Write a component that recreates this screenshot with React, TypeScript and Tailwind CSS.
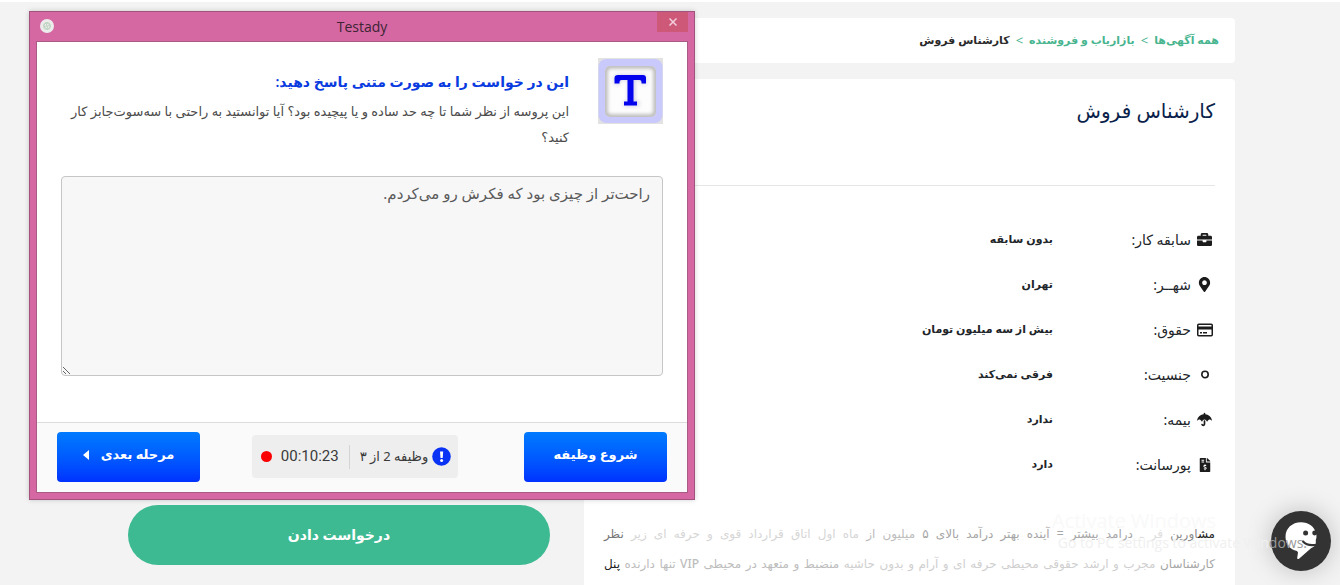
import React from "react";
import { FaBriefcase, FaMapMarkerAlt, FaUmbrella, FaFileInvoiceDollar } from "react-icons/fa";

function CardIcon() {
  return (
    <svg viewBox="0 0 16 14" className="w-4 h-[14px]" fill="none">
      <rect x="0.75" y="1.25" width="14.5" height="11.5" rx="1" stroke="currentColor" strokeWidth="1.5" />
      <rect x="1" y="3.5" width="14" height="3" fill="currentColor" />
      <path d="M3 9.8h2M6 9.8h4" stroke="currentColor" strokeWidth="1.4" />
    </svg>
  );
}

function RingIcon() {
  return (
    <svg viewBox="0 0 10 10" className="size-[10px]" fill="none">
      <circle cx="5" cy="4.500" r="3.2" stroke="currentColor" strokeWidth="1.6" />
    </svg>
  );
}

const facts = [
  { label: "سابقه کار:", value: "بدون سابقه", icon: <FaBriefcase size={15} /> },
  { label: "شهــر:", value: "تهران", icon: <FaMapMarkerAlt size={15} /> },
  { label: "حقوق:", value: "بیش از سه میلیون تومان", icon: <CardIcon /> },
  { label: "جنسیت:", value: "فرقی نمی‌کند", icon: <RingIcon /> },
  { label: "بیمه:", value: "ندارد", icon: <FaUmbrella size={15} /> },
  { label: "پورسانت:", value: "دارد", icon: <FaFileInvoiceDollar size={14} /> },
];

function TextTaskIcon() {
  return (
    <svg viewBox="0 0 65 66" className="w-[65px] h-[66px] shrink-0">
      <defs>
        <filter id="soft" x="-20%" y="-20%" width="140%" height="140%">
          <feGaussianBlur stdDeviation="2.2" />
        </filter>
        <clipPath id="panel">
          <rect x="7" y="8" width="51" height="51" rx="5" />
        </clipPath>
      </defs>
      <rect width="65" height="66" fill="#e2e2e2" />
      <rect x="0.5" y="1" width="64" height="64" rx="8" fill="#c9c9fb" />
      <rect x="7" y="8" width="51" height="51" rx="5" fill="#fdfdfd" />
      <g clipPath="url(#panel)">
        <rect x="7" y="8" width="51" height="51" rx="5" fill="none" stroke="#a2a2a2" strokeWidth="4" filter="url(#soft)" />
      </g>
      <path
        d="M20 17h25q3 0 3 3v6.500h-4.500v-3q0-2-2-2h-4.500v22h4v4.500H26v-4.500h4v-22h-6q-2 0-2 2v3h-5.500V20q0-3 3.500-3z"
        fill="#9a9ad0"
        opacity="0.5"
        filter="url(#soft)"
      />
      <path
        d="M20 17h25q3 0 3 3v5.500h-4.500v-1.500q0-2-2-2h-6v21.500h3.500v4H26v-4h3.500V22h-6q-2 0-2 2v1.500H16.500V20q0-3 3.500-3z"
        fill="#0303ee"
      />
    </svg>
  );
}

function ChatIcon() {
  return (
    <svg viewBox="0 0 60 60" className="size-[60px]">
      <circle cx="30" cy="30" r="30" fill="#333" />
      <path
        d="M30 11.300c-9 0-15.500 6.200-15.500 14.200 0 7.500 4.500 13 11.500 14.500l1 1.500-.8 5.500c0 1.200 1 1.400 1.800.700l12-10.500c2.800-1.200 4.300-2.700 4.800-4.200v-4.200c.8-1.800 1-4 .2-6.300C43.500 15.500 37.500 11.300 30 11.300z"
        fill="#fff"
      />
      <circle cx="34.600" cy="22" r="2.500" fill="#333" />
      <circle cx="43.600" cy="22" r="2.400" fill="#333" />
      <path d="M32 30.500c3 3.200 8 4.300 14 3" fill="none" stroke="#333" strokeWidth="2.200" strokeLinecap="round" />
    </svg>
  );
}

function TestadyWindow() {
  return (
    <section
      role="dialog"
      aria-label="Testady"
      dir="rtl"
      className="absolute left-[29px] top-[9px] flex w-[666px] flex-col border border-[#a3517d] bg-[#d568a2] px-[6px] pb-[6px] shadow-[0_0_5px_rgba(0,0,0,0.18)]"
    >
      <header dir="ltr" className="grid h-[29px] grid-cols-[1fr_auto_1fr]">
        <span className="ml-1 mt-[7px] flex size-[14px] items-center justify-center rounded-full bg-[#ececec]">
          <svg viewBox="0 0 10 10" className="size-[10px]" fill="none" stroke="#b9d0bd" strokeWidth="0.8">
            <circle cx="5" cy="5" r="3.600" />
            <path d="M2 4l2-2 3 1 1 3-2 2-3-1zM4 2l2 6M2.500 5.500l5-1" />
          </svg>
        </span>
        <h2 className="mt-[5px] font-['Open_Sans',sans-serif] text-sm leading-5 text-[#3c2434]">Testady</h2>
        <button
          type="button"
          aria-label="Close"
          className="flex h-5 w-[31px] items-center justify-center justify-self-end bg-[#cd5877]"
        >
          <svg viewBox="0 0 8 8" className="size-2" stroke="#f3cfdd" strokeWidth="1.500">
            <path d="M0.500 0.500l7 7M7.500 0.500l-7 7" />
          </svg>
        </button>
      </header>
      <div className="border border-[#a95a85] bg-white">
        <div className="px-6 pt-4">
          <div className="flex gap-[29px]">
            <TextTaskIcon />
            <div className="grow pt-2">
              <h3 className="text-sm font-semibold leading-8 text-[#0a3be0]">این در خواست را به صورت متنی پاسخ دهید:</h3>
              <p className="text-[13px] leading-[26px] text-[#4c4c4c]">
                این پروسه از نظر شما تا چه حد ساده و یا پیچیده بود؟ آیا توانستید به راحتی با سه‌سوت‌جابز کار کنید؟
              </p>
            </div>
          </div>
          <textarea
            aria-label="پاسخ"
            defaultValue="راحت‌تر از چیزی بود که فکرش رو می‌کردم."
            className="mt-[26px] block h-[200px] w-full resize rounded border border-[#c6c6c6] bg-[#f7f7f7] px-3 py-[2px] text-[15px] leading-7 text-[#5a5a5a]"
          />
        </div>
        <footer className="mt-[46px] flex h-[70px] items-center justify-between border-t border-[#dcdcdc] bg-[#fafafa] px-5 pb-[2px]">
          <button
            type="button"
            className="h-[50px] w-[143px] rounded bg-linear-to-b from-[#007aff] to-[#0030ff] pb-1 text-[13px] font-semibold text-white"
          >
            شروع وظیفه
          </button>
          <div className="mr-[14px] flex h-[43px] items-center rounded-sm bg-[#eee] pl-[9px] pr-[7px] text-[#3a3a3a]">
            <svg viewBox="0 0 19 19" className="size-[19px]">
              <circle cx="9.500" cy="9.500" r="9.300" fill="#0a32f5" />
              <path d="M8 4.500h3.200l-.5 6.500H8.500z" fill="#fff" />
              <circle cx="9.600" cy="13.600" r="1.500" fill="#fff" />
            </svg>
            <span className="mr-1 text-[13px]">وظیفه 2 از ۳</span>
            <span className="mx-[10px] h-6 w-px bg-[#d4d4d4]" />
            <time className="font-['Roboto',sans-serif] text-[15px]" dir="ltr">
              00:10:23
            </time>
            <span className="mr-[9px] size-[11px] rounded-full bg-[#fb0000]" />
          </div>
          <button
            type="button"
            className="flex h-[50px] w-[143px] items-center justify-center gap-3 rounded bg-linear-to-b from-[#007aff] to-[#0030ff] pb-1 text-[13px] font-semibold text-white"
          >
            مرحله بعدی
            <svg viewBox="0 0 6 10" className="h-[10px] w-[6px]" fill="currentColor">
              <path d="M6 0v10L0 5z" />
            </svg>
          </button>
        </footer>
      </div>
    </section>
  );
}

export default function App() {
  return (
    <div
      dir="rtl"
      className="relative flex h-screen flex-col overflow-hidden border-t-2 border-white bg-[#f3f3f3] font-['Noto_Sans','DejaVu_Sans',sans-serif]"
    >
      <div className="flex grow gap-[34px] pl-32 pr-[105px] pt-4">
        <main className="flex min-w-0 grow flex-col gap-4">
          <nav className="flex h-[45px] shrink-0 items-center gap-[6px] rounded bg-white px-4 text-[11px] font-semibold text-[#48b58f]">
            <a href="#all">همه آگهی‌ها</a>
            <span className="text-[13px] font-normal">&gt;</span>
            <a href="#sales">بازاریاب و فروشنده</a>
            <span className="text-[13px] font-normal">&gt;</span>
            <span className="text-[#2a2a2a]">کارشناس فروش</span>
          </nav>
          <article className="flex grow flex-col rounded-t bg-white px-5">
            <h1 className="border-b border-[#e6e6e6] pb-[57px] pt-[15px] text-xl font-medium leading-[34px] text-[#0b1f4b]">
              کارشناس فروش
            </h1>
            <dl className="pt-[31px]">
              {facts.map((fact) => (
                <div key={fact.label} className="flex h-[45px] items-center text-[#212529]">
                  <dt className="flex w-[162px] items-center gap-[3px] text-sm">
                    <span className="flex w-[21px] justify-center text-[#1c1c1c]">{fact.icon}</span>
                    {fact.label}
                  </dt>
                  <dd className="text-[11px] font-semibold">{fact.value}</dd>
                </div>
              ))}
            </dl>
            <div className="mt-8 text-xs font-medium leading-[30px] text-[#bdbdbd]">
              <p className="whitespace-nowrap [text-align-last:justify]">
                <span className="text-[#222]">مش</span>
                <span className="text-[#8c8c8c]">اورین</span> <span className="text-[#dedede]">فر ـ</span>{" "}
                <span className="text-[#a6a6a6]">درآمد بیشتر = آینده بهتر درآمد بالای ۵</span> میلیون از{" "}
                <span className="text-[#d6d6d6]">ماه اول اتاق قرارداد قوی و حرفه ای زیر</span>{" "}
                <span className="text-[#777]">نظر</span>
              </p>
              <p className="whitespace-nowrap [text-align-last:justify]">
                <span className="text-[#a6a6a6]">کارشناسان</span>{" "}
                <span className="text-[#cfcfcf]">مجرب و ارشد حقوقی محیطی حرفه ای و آرام و بدون حاشیه</span> منضبط و
                متعهد در محیطی VIP تنها دارنده <span className="text-[#222]">پنل</span>
              </p>
            </div>
          </article>
        </main>
        <aside className="w-[422px] shrink-0 pt-[487px]">
          <button
            type="button"
            className="h-[60px] w-full rounded-full bg-[#3dba92] text-sm font-bold text-white"
          >
            درخواست دادن
          </button>
        </aside>
      </div>
      <TestadyWindow />
      <button type="button" aria-label="Chat" className="absolute bottom-[14px] right-[9px] rounded-full shadow-[0_0_26px_rgba(0,0,0,0.22)]">
        <ChatIcon />
      </button>
      <div
        dir="ltr"
        className="pointer-events-none absolute bottom-8 right-[33px] w-[255px] whitespace-nowrap font-['Open_Sans',sans-serif]"
      >
        <p className="text-xl leading-6 text-[#f9f9f9]">Activate Windows</p>
        <p className="text-right text-sm leading-5 text-[#f0f0f0]">
          Go to PC settings to activate Win<span className="text-[#9a9a9a]">dows.</span>
        </p>
      </div>
    </div>
  );
}
